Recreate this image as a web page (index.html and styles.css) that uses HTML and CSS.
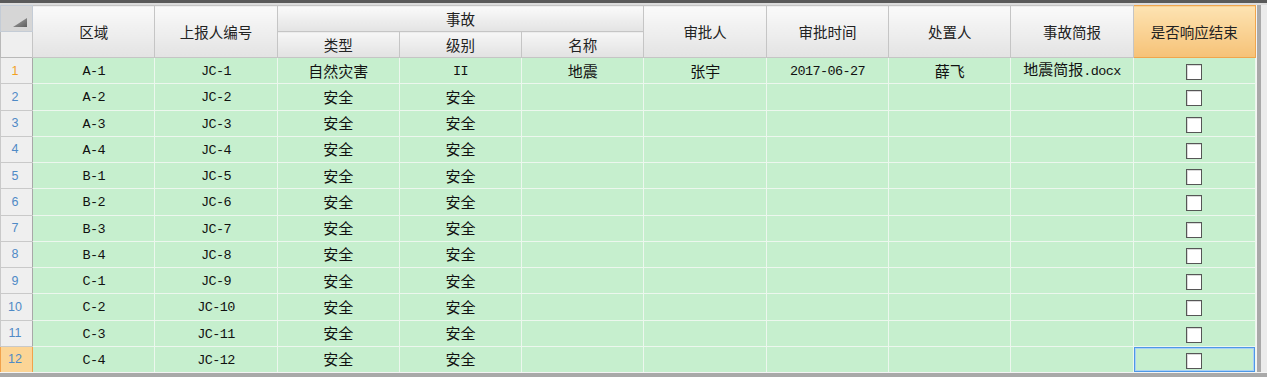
FILE: index.html
```html
<!DOCTYPE html>
<html lang="zh-CN">
<head>
<meta charset="utf-8">
<title>事故响应</title>
<link rel="stylesheet" href="styles.css">
</head>
<body>
<div class="frame">
  <div class="view">
    <table class="grid">
      <colgroup>
        <col class="c-rh">
        <col><col><col><col><col><col><col><col><col><col>
      </colgroup>
      <thead>
        <tr class="h1">
          <th class="corner"><svg width="14" height="9" viewBox="0 0 14 9"><defs><linearGradient id="tg" x1="0" y1="0" x2="1" y2="1"><stop offset="0" stop-color="#a8a8a8"/><stop offset="1" stop-color="#5e5e5e"/></linearGradient></defs><polygon points="14,0 14,9 0,9" fill="url(#tg)"/></svg></th>
          <th rowspan="2">区域</th>
          <th rowspan="2">上报人编号</th>
          <th colspan="3">事故</th>
          <th rowspan="2">审批人</th>
          <th rowspan="2">审批时间</th>
          <th rowspan="2">处置人</th>
          <th rowspan="2">事故简报</th>
          <th rowspan="2" class="hot">是否响应结束</th>
        </tr>
        <tr class="h2">
          <th class="corner2"></th>
          <th>类型</th>
          <th>级别</th>
          <th>名称</th>
        </tr>
      </thead>
      <tbody>
        <tr><th class="rh cur">1</th><td><span class="m">A-1</span></td><td><span class="m">JC-1</span></td><td>自然灾害</td><td><span class="m">II</span></td><td>地震</td><td>张宇</td><td><span class="m">2017-06-27</span></td><td>薛飞</td><td>地震简报<span class="m">.docx</span></td><td><span class="cb"></span></td></tr>
        <tr><th class="rh">2</th><td><span class="m">A-2</span></td><td><span class="m">JC-2</span></td><td>安全</td><td>安全</td><td></td><td></td><td></td><td></td><td></td><td><span class="cb"></span></td></tr>
        <tr><th class="rh">3</th><td><span class="m">A-3</span></td><td><span class="m">JC-3</span></td><td>安全</td><td>安全</td><td></td><td></td><td></td><td></td><td></td><td><span class="cb"></span></td></tr>
        <tr><th class="rh">4</th><td><span class="m">A-4</span></td><td><span class="m">JC-4</span></td><td>安全</td><td>安全</td><td></td><td></td><td></td><td></td><td></td><td><span class="cb"></span></td></tr>
        <tr><th class="rh">5</th><td><span class="m">B-1</span></td><td><span class="m">JC-5</span></td><td>安全</td><td>安全</td><td></td><td></td><td></td><td></td><td></td><td><span class="cb"></span></td></tr>
        <tr><th class="rh">6</th><td><span class="m">B-2</span></td><td><span class="m">JC-6</span></td><td>安全</td><td>安全</td><td></td><td></td><td></td><td></td><td></td><td><span class="cb"></span></td></tr>
        <tr><th class="rh">7</th><td><span class="m">B-3</span></td><td><span class="m">JC-7</span></td><td>安全</td><td>安全</td><td></td><td></td><td></td><td></td><td></td><td><span class="cb"></span></td></tr>
        <tr><th class="rh">8</th><td><span class="m">B-4</span></td><td><span class="m">JC-8</span></td><td>安全</td><td>安全</td><td></td><td></td><td></td><td></td><td></td><td><span class="cb"></span></td></tr>
        <tr><th class="rh">9</th><td><span class="m">C-1</span></td><td><span class="m">JC-9</span></td><td>安全</td><td>安全</td><td></td><td></td><td></td><td></td><td></td><td><span class="cb"></span></td></tr>
        <tr><th class="rh">10</th><td><span class="m">C-2</span></td><td><span class="m">JC-10</span></td><td>安全</td><td>安全</td><td></td><td></td><td></td><td></td><td></td><td><span class="cb"></span></td></tr>
        <tr><th class="rh">11</th><td><span class="m">C-3</span></td><td><span class="m">JC-11</span></td><td>安全</td><td>安全</td><td></td><td></td><td></td><td></td><td></td><td><span class="cb"></span></td></tr>
        <tr><th class="rh sel">12</th><td><span class="m">C-4</span></td><td><span class="m">JC-12</span></td><td>安全</td><td>安全</td><td></td><td></td><td></td><td></td><td></td><td class="selcell"><span class="cb"></span></td></tr>
      </tbody>
    </table>
    <div class="vstrip"></div>
  </div>
  <div class="hstrip"></div>
</div>
</body>
</html>
```

FILE: styles.css
```css
html, body {
  margin: 0;
  padding: 0;
  background: #eeeeee;
}

.frame {
  width: 1267px;
  height: 377px;
  box-sizing: border-box;
  border-top: 3px solid #5a5a5a;
  padding-top: 2px;
  background: #dcdcdc;
  overflow: hidden;
  display: flex;
  flex-direction: column;
}

.view {
  display: flex;
  height: 367px;
  flex: 0 0 auto;
}

.grid {
  width: 1256px;
  flex: 0 0 1256px;
  align-self: flex-start;
  border-collapse: collapse;
  table-layout: fixed;
  font-family: "Noto Sans CJK SC", sans-serif;
}

.c-rh {
  width: 32px;
}

.grid th,
.grid td {
  padding: 0;
  overflow: hidden;
  white-space: nowrap;
}

thead tr {
  height: 26px;
}

thead th {
  font-weight: normal;
  font-size: 14.5px;
  color: #222222;
  text-align: center;
  vertical-align: middle;
  background: linear-gradient(#fafafa, #e3e3e3);
  border: 1px solid #c5c5c5;
  line-height: 18px;
}

thead .h2 th {
  background: linear-gradient(#f6f6f6, #e2e2e2);
}

thead th.hot {
  background: linear-gradient(#fde3b2, #f6c277);
  border: 1px solid #f0a54c;
}

thead th.corner {
  background: #d6d6d6;
  border: 1px solid #c4ccd6;
  text-align: right;
  vertical-align: bottom;
  padding: 0 5px 4px 0;
  line-height: 0;
}

thead th.corner svg {
  display: inline-block;
}

thead .h2 th.corner2 {
  background: #efefef;
  border: 1px solid #b9b9b9;
  border-right: 1px solid #a9a9a9;
}

tbody tr {
  height: 26.25px;
}

tbody td {
  background: #c6efce;
  border: 1px solid #ecf7ee;
  text-align: center;
  vertical-align: middle;
  font-size: 15px;
  color: #111111;
  line-height: 18px;
}

tbody td .m {
  font-family: "Liberation Mono", monospace;
  font-size: 13.5px;
  letter-spacing: -0.6px;
}

th.rh {
  background: #efefef;
  border: 1px solid #c9c9c9;
  border-right: 1px solid #a8a8a8;
  font-family: "Liberation Sans", sans-serif;
  font-weight: normal;
  font-size: 12.5px;
  line-height: 16px;
  color: #4f8ac6;
  text-align: center;
  padding-right: 3px;
}

th.rh.cur {
  color: #f2a11f;
}

th.rh.sel {
  background: #fcd596;
  border: 1px solid #f2a24a;
}

td.selcell {
  box-shadow: inset 0 0 0 1px #4d98e6, inset 0 0 0 2px #a9d0f5;
}

.cb {
  display: inline-block;
  width: 14px;
  height: 14px;
  box-sizing: content-box;
  border: 1px solid #565656;
  background: #ffffff;
  vertical-align: middle;
  box-shadow: inset 1px 1px 0 #d9d9d9;
}

.vstrip {
  flex: 1 1 auto;
  background: linear-gradient(to right, #f4f4f4 0 1px, #a9a9a9 1px 5px, #ececec 5px);
}

.hstrip {
  flex: 1 1 auto;
  background: linear-gradient(#f4f4f4 0 1px, #a9a9a9 1px);
}
```
